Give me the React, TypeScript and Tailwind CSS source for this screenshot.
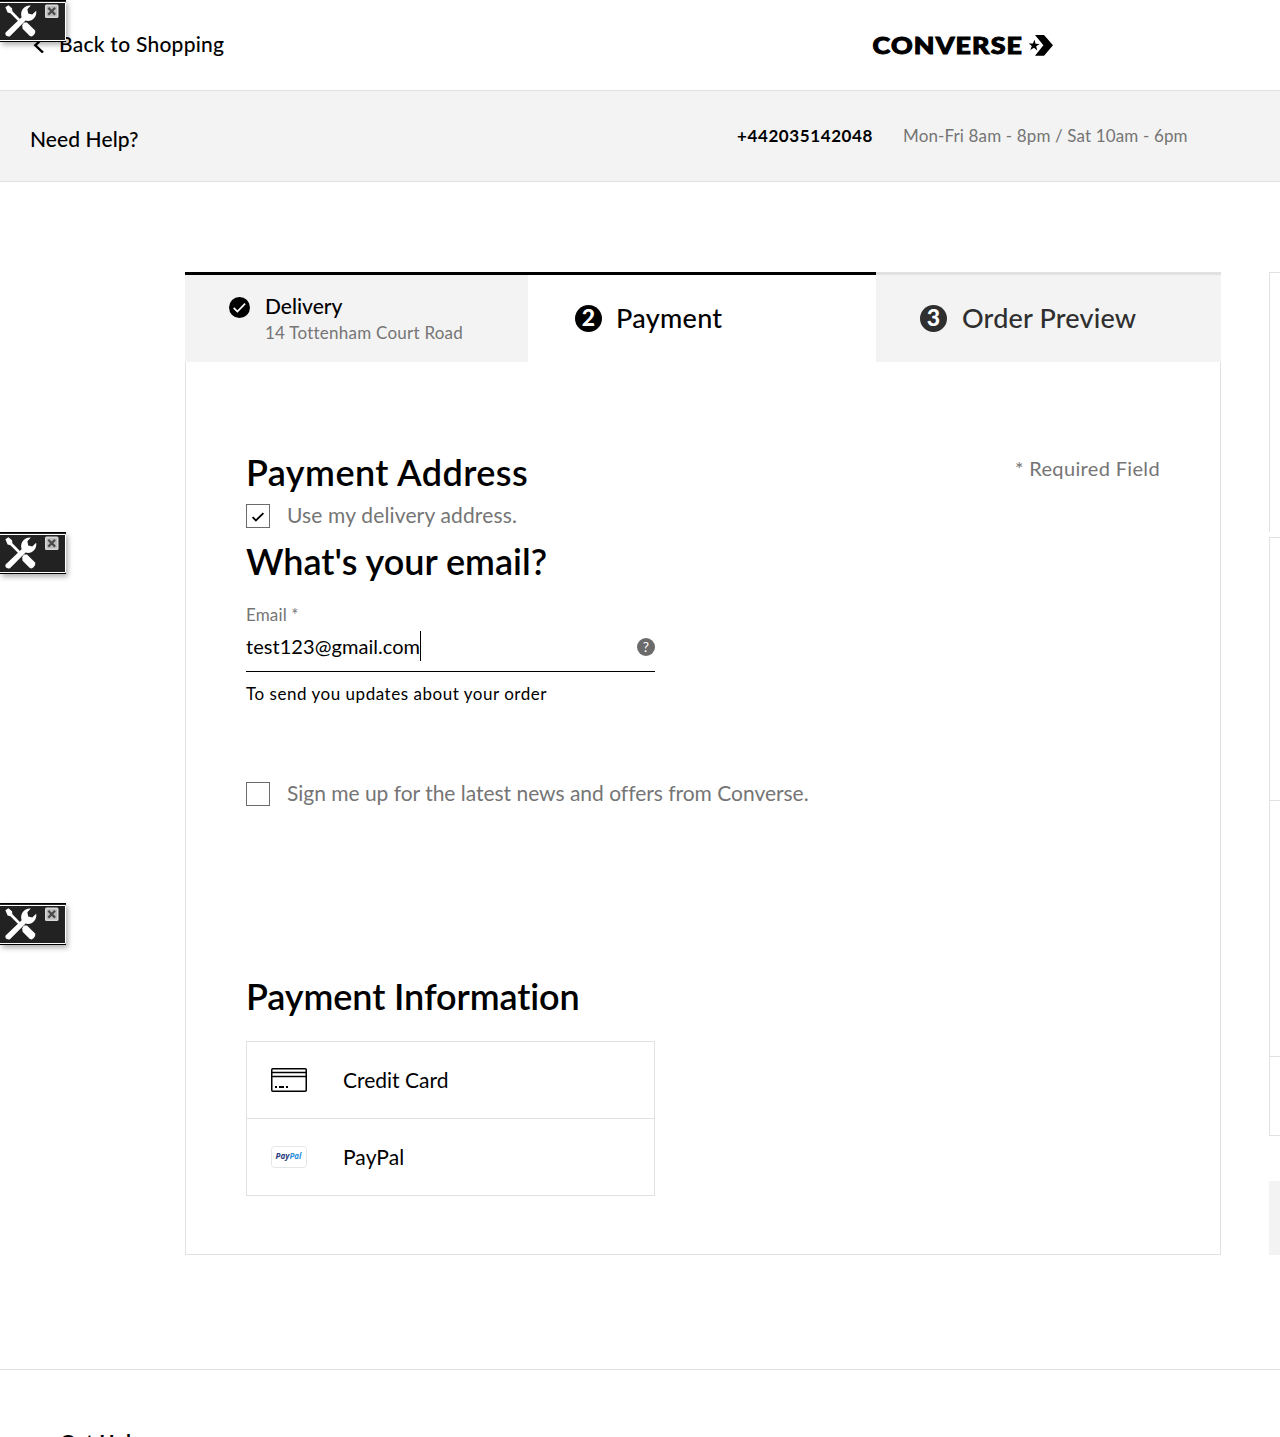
import type { ReactNode } from "react";

function ToolBadge({ className }: { className: string }) {
  return (
    <div className={`absolute left-0 z-10 h-[42px] w-[66px] border-y border-black bg-[#222] shadow-[2px_3px_5px_rgba(0,0,0,0.3)] ${className}`}>
      <svg className="block h-10 w-[66px]" viewBox="0 1 66 40">
        <path d="M0 2.5H65.5V40.5H0" fill="none" stroke="#fff" />
        <path d="M5.4 7.2 8.4 5.2 12 8.2 12.4 11.2 22.6 21.8 20.8 23.8 10.4 13.2 7.6 12.6Z" fill="#fff" />
        <path d="M23.8 22.6 27 22.4 34.8 30.2C36 32 35 34.6 31.8 36.4L29.8 36 22.6 28.8 22.2 25.6Z" fill="#fff" />
        <path d="M5.6 32.6 21.6 17.2C19.8 11.6 23.6 5.2 30.8 5.6L27.4 9.2 28.2 13.4 32.2 14.4 36.2 10.8C37.2 17.4 31.4 22.4 25.6 20.6L10 36.2C7 37.2 4.6 35 5.6 32.6Z" fill="#fff" />
        <rect x="45" y="4.5" width="13.5" height="13.5" rx="1.5" fill="#d8d8d8" />
        <rect x="46.5" y="6" width="10.5" height="10.5" fill="#bcbcbc" />
        <path d="m48.3 7.8 6.8 6.8m0-6.8-6.8 6.8" stroke="#4a4a4a" strokeWidth="2.2" />
      </svg>
    </div>
  );
}

function ConverseLogo() {
  return (
    <svg className="block h-8 w-[182px]" viewBox="0 -4 182 32">
      <text x="0.6" y="20.6" textLength="150.5" lengthAdjust="spacingAndGlyphs" stroke="#000" strokeWidth="1" className="font-['Lato'] text-[23px] font-black tracking-[1px]">
        CONVERSE
      </text>
      <path d="M163 2H172L181 12.2 172 22.8H163L171.4 12.2Z" />
      <path d="m162.6 6.8.9 4 4.2.3-3.5 2.2 1.1 4.1-3.3-2.7-3.7 2.2 1.5-4-3.1-2.4 4.1-.1Z" />
    </svg>
  );
}

function Checkbox({ checked = false, children }: { checked?: boolean; children: ReactNode }) {
  return (
    <label className="flex h-6 items-center">
      <span className="flex size-6 items-center justify-center border border-[#6b6b6b] bg-white">
        {checked && (
          <svg className="size-[22px]" viewBox="0 0 22 22" fill="none" stroke="#000" strokeWidth="1.8">
            <path d="m5.6 12.2 3.3 3.3 7.5-7.3" />
          </svg>
        )}
      </span>
      {children}
    </label>
  );
}

function StepNumber({ className, children }: { className: string; children: ReactNode }) {
  return (
    <span className={`flex size-[27px] items-center justify-center rounded-full pb-0.5 text-[23px] leading-[25px] font-black text-white ${className}`}>
      {children}
    </span>
  );
}

export default function App() {
  return (
    <div className="relative h-[1437px] w-[1280px] overflow-hidden bg-white font-['Lato','Open_Sans',sans-serif] text-black [font-variant-ligatures:none]">
      <ToolBadge className="top-0" />
      <ToolBadge className="top-[532px]" />
      <ToolBadge className="top-[903px]" />

      <header className="flex h-[91px] items-center border-b border-[#e1e1e1] pl-[33px]">
        <svg className="h-4 w-3" viewBox="0 0 12 16" fill="none" stroke="#000" strokeWidth="2.4">
          <path d="M10 1 2.3 8.3 10 15.6" />
        </svg>
        <span className="ml-[14px] w-[813px] pb-0.5 text-[21px] font-medium tracking-[0.25px]">Back to Shopping</span>
        <ConverseLogo />
      </header>

      <section className="flex h-[91px] items-center border-b border-[#e1e1e1] bg-[#f3f3f3] pl-[30px]">
        <span className="w-[707px] pt-1.5 text-[21px] font-medium tracking-[0.1px]">Need Help?</span>
        <span className="w-[166px] text-[17px] font-bold tracking-[0.6px]">+442035142048</span>
        <span className="text-[17px] tracking-[0.14px] text-[#757575]">Mon-Fri 8am - 8pm / Sat 10am - 6pm</span>
      </section>

      <main className="mt-[90px] flex h-[983px] gap-12 pl-[185px]">
        <div className="flex w-[1036px] shrink-0 flex-col">
          <nav className="flex h-[90px]">
            <div className="flex w-[343px] border-t-3 border-black bg-[#f3f3f3] pl-11">
              <svg className="mt-[22px] size-[21px]" viewBox="0 0 21 21">
                <circle cx="10.5" cy="10.5" r="10.5" />
                <path d="m4.7 10.8 3.7 3.7 7.7-7.8" fill="none" stroke="#fff" strokeWidth="1.7" />
              </svg>
              <div className="ml-[15px] pt-[17px]">
                <div className="text-[21px] leading-[27px] font-medium">Delivery</div>
                <div className="text-[17px] leading-7 tracking-[0.24px] text-[#757575]">14 Tottenham Court Road</div>
              </div>
            </div>
            <div className="flex w-[348px] items-center border-t-3 border-black pl-[47px]">
              <StepNumber className="bg-black">2</StepNumber>
              <span className="ml-[14px] pb-0.5 text-[27px] leading-[30px] font-medium tracking-[0.3px]">Payment</span>
            </div>
            <div className="flex flex-1 items-center border-t-3 border-[#e1e1e1] bg-[#f3f3f3] pl-11 text-[#2f2f2f]">
              <StepNumber className="bg-[#2f2f2f]">3</StepNumber>
              <span className="ml-[15px] pb-0.5 text-[27px] leading-[30px] font-medium tracking-[0.18px]">Order Preview</span>
            </div>
          </nav>

          <div className="flex-1 border-x border-b border-[#e1e1e1] px-[60px] pt-[88px]">
            <div className="flex justify-between">
              <h1 className="text-[36px] leading-[44px] font-semibold tracking-[0.42px]">Payment Address</h1>
              <span className="text-[20px] leading-[37px] tracking-[0.35px] text-[#757575]">* Required Field</span>
            </div>
            <div className="mt-2.5">
              <Checkbox checked>
                <span className="ml-[17px] pb-0.5 text-[21px] leading-6 tracking-[0.15px] text-[#757575]">Use my delivery address.</span>
              </Checkbox>
            </div>
            <h2 className="mt-[13px] text-[36px] leading-10 font-semibold">What's your email?</h2>

            <div className="mt-6 w-[409px]">
              <div className="text-[17px] leading-5 tracking-[0.15px] text-[#757575]">Email *</div>
              <div className="mt-1.5 flex h-[41px] items-start border-b border-black">
                <span className="text-[20px] leading-[30px] tracking-[0.05px]">test123@gmail.com</span>
                <span className="h-[30px] w-px bg-black" />
                <span className="mt-[7px] ml-auto flex size-[18px] items-center justify-center rounded-full bg-[#6b6b6b] text-[14px] leading-[18px] text-white">?</span>
              </div>
              <div className="mt-3 text-[17px] leading-5 tracking-[0.53px] whitespace-nowrap">To send you updates about your order</div>
            </div>

            <div className="mt-[78px]">
              <Checkbox>
                <span className="ml-[17px] pb-0.5 text-[21px] leading-6 tracking-[-0.02px] text-[#757575]">Sign me up for the latest news and offers from Converse.</span>
              </Checkbox>
            </div>

            <h2 className="mt-[168px] text-[36px] leading-[44px] font-semibold tracking-[-0.1px]">Payment Information</h2>

            <div className="mt-[23px] flex w-[409px] flex-col divide-y divide-[#e1e1e1] border border-[#e1e1e1]">
              <div className="flex h-[77px] items-center pl-6">
                <svg className="h-6 w-9" viewBox="0 0 36 24">
                  <rect x=".75" y=".75" width="34.5" height="22.5" rx="1" fill="#fff" stroke="#000" strokeWidth="1.5" />
                  <path d="M1 4.5H35M1 8.5H35" stroke="#000" strokeWidth="1.3" />
                  <path d="M4 19H6M8 19H13M15 19H17" stroke="#000" strokeWidth="2" />
                </svg>
                <span className="ml-9 text-[21px] leading-6">Credit Card</span>
              </div>
              <div className="flex h-[76px] items-center pl-6">
                <svg className="h-[22px] w-9" viewBox="0 0 36 22">
                  <rect x=".5" y=".5" width="35" height="21" rx="3" fill="#fff" stroke="#e4e7ea" />
                  <text x="4.5" y="13.3" className="font-['Open_Sans'] text-[8px] font-bold italic" textLength="26" lengthAdjust="spacingAndGlyphs">
                    <tspan fill="#253b80">Pay</tspan><tspan fill="#2a8fdc">Pal</tspan>
                  </text>
                </svg>
                <span className="ml-9 text-[21px] leading-6 tracking-[0.1px]">PayPal</span>
              </div>
            </div>
          </div>
        </div>

        <aside className="flex w-[400px] shrink-0 flex-col">
          <div className="h-[260px] border-t border-l border-[#e1e1e1]" />
          <div className="mt-[5px] h-[263px] border-t border-l border-[#e1e1e1]" />
          <div className="h-[256px] border-t border-l border-[#e1e1e1]" />
          <div className="h-20 border-y border-l border-[#e1e1e1]" />
          <div className="mt-[45px] h-[74px] bg-[#f3f3f3]" />
        </aside>
      </main>

      <footer className="mt-[114px] border-t border-[#e1e1e1] pt-[58px] pl-[60px]">
        <h3 className="text-[20px] leading-7 font-bold tracking-[0.5px]">Get Help</h3>
      </footer>
    </div>
  );
}
